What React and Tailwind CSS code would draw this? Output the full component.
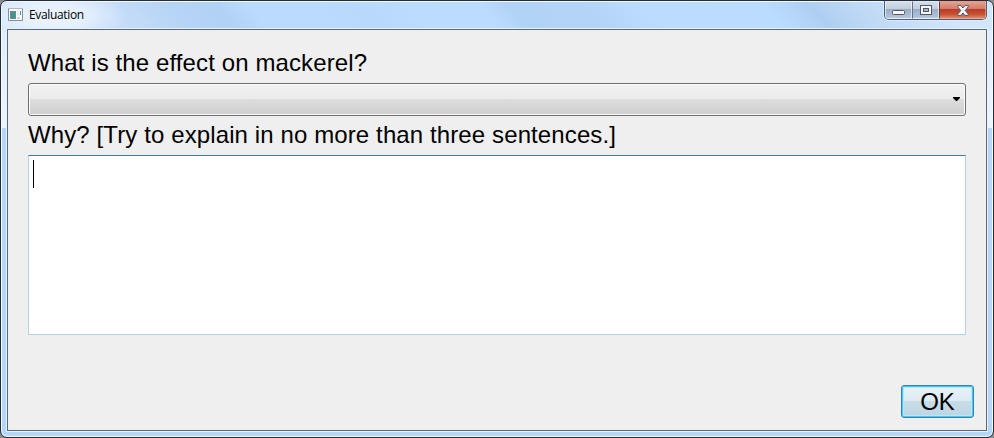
function TitleBar() {
  return (
    <header className="flex h-[27px] shrink-0 items-start justify-between pl-[1px]">
      <div className="flex h-[26px] items-center">
        <svg width="15" height="13" viewBox="0 0 15 13" className="-mt-px shrink-0" shapeRendering="crispEdges">
          <rect width="15" height="13" fill="#8a8f94" />
          <rect width="15" height="1" fill="#b4b6b8" />
          <rect x="1" y="1" width="13" height="11" fill="#fafafa" />
          <rect x="2" y="3" width="6" height="8" fill="#5a8fb0" />
          <rect x="3" y="4" width="4" height="6" fill="#459578" />
          <rect x="9" y="3" width="2" height="5" fill="#edf0f1" />
          <rect x="12" y="3" width="1" height="4" fill="#47988b" />
          <rect x="9" y="9" width="3" height="2" fill="#d2d4d5" />
        </svg>
        <span className="ml-[6px] -mt-px font-['Open_Sans','Noto_Sans',sans-serif] text-[12px] leading-none tracking-[-0.35px] text-black">
          Evaluation
        </span>
      </div>
      <div className="-mt-px flex h-[19px] overflow-hidden rounded-b-[5px] border border-t-0 border-[#525e70] shadow-[0_0_0_1px_#d9eafa]">
        <button aria-label="Minimize" className="flex w-[27px] items-center justify-center border border-[#ffffff99] bg-[linear-gradient(#d2deea_0,#c2cddb_45%,#99adc4_46%,#b2c7de_100%)]">
          <svg width="13" height="5" viewBox="0 0 13 5" className="mt-[5px]">
            <rect x=".5" y=".5" width="12" height="4" rx="1" fill="#f6f6f6" stroke="#535666" />
          </svg>
        </button>
        <button aria-label="Maximize" className="flex w-[27px] items-center justify-center border border-l-[#647489] border-y-[#ffffff99] border-r-[#ffffff99] bg-[linear-gradient(#d2deea_0,#c2cddb_45%,#99adc4_46%,#b2c7de_100%)]">
          <svg width="12" height="10" viewBox="0 0 12 10" shapeRendering="crispEdges">
            <rect x=".5" y=".5" width="11" height="9" fill="#f6f6f6" stroke="#535666" />
            <rect x="3.5" y="3.5" width="5" height="3" fill="#9fb8d2" stroke="#535666" />
          </svg>
        </button>
        <button aria-label="Close" className="flex w-[47px] items-center justify-center border border-l-[#6b3436] border-y-[#f0b3a599] border-r-[#f0b3a599] bg-[linear-gradient(#e4a090_0,#d27a68_45%,#b93c29_46%,#c64e30_75%,#dc8a68_100%)]">
          <svg width="12" height="11" viewBox="0 0 12 11">
            <path
              d="M.7.6h3.4L6 3 7.9.6h3.4v1.2L8.2 5.5l3.1 3.7v1.2H7.9L6 8l-1.9 2.4H.7V9.2l3.1-3.7L.7 1.8z"
              fill="#f7f7f7"
              stroke="#535666"
              strokeLinejoin="round"
            />
          </svg>
        </button>
      </div>
    </header>
  );
}

export default function App() {
  return (
    <div className="h-[438px] w-[994px] overflow-hidden bg-[#8b8b8d]">
      <div className="relative flex h-full w-full flex-col overflow-hidden rounded-[7px] border border-[#252c39] bg-[linear-gradient(#dcebfc_0,#edf4fd_127px,#b6d6f7_127px,#b6d6f7_100%)] px-[6px] pb-[6px] pt-px shadow-[inset_0_0_0_1px_#f2f9ff]">
        <div className="pointer-events-none absolute inset-x-px top-px h-[28px] bg-[radial-gradient(ellipse_75px_28px_at_50px_14px,#eef6fe_0%,#e8f2fedd_45%,#e2effe00_100%),linear-gradient(50deg,#d0e4fb_0,#cde2fa_50px,#c6ddf8_95px,#b6d4f5_145px,#b1d2f4_180px,#bbdbfd_205px,#bbdbfd_250px,#b8d9fb_290px,#bbdcfd_325px,#bbdcfe_383px,#b1d3f5_403px,#b3d4f6_460px,#bcdcfd_505px,#badcfe_600px,#aecff1_635px,#c0daf6_675px,#d1e5fb_735px)]" />
        <div className="relative flex flex-1 flex-col">
          <TitleBar />
          <main className="flex flex-1 flex-col border border-[#5b6877] bg-[#efefef] px-[20px] font-['Liberation_Sans',Arial,sans-serif] text-[24px] text-black shadow-[0_0_0_1px_#e5f2ff]">
            <label className="mt-[18px] h-[28px] whitespace-nowrap leading-[30px] tracking-[0.11px]">What is the effect on mackerel?</label>
            <div className="mt-[7px] flex h-[33px] items-center justify-end rounded-[3px] border border-[#707070] bg-[linear-gradient(#f2f2f2_0,#ebebeb_50%,#dddddd_50%,#cfcfcf_100%)] pr-[5px] shadow-[inset_0_0_0_1px_#fbfbfb]">
              <svg width="7" height="4" viewBox="0 0 7 4" className="-mt-px">
                <path d="M0 0h7v1L4 4H3L0 1z" fill="#000" />
              </svg>
            </div>
            <label className="mt-[4px] h-[30px] whitespace-nowrap leading-[30px] tracking-[0.11px]">Why? [Try to explain in no more than three sentences.]</label>
            <div className="mt-[5px] h-[180px] border border-[#b5cfe7] border-t-[#3d7bad] bg-white pl-[4px] pt-[4px]">
              <div className="h-[28px] w-px bg-black" />
            </div>
            <button className="-mr-[8px] mt-[50px] h-[33px] w-[73px] self-end rounded-[3px] border border-[#3c7fb1] bg-[linear-gradient(#eaf3f8_0,#dceaf2_49%,#c7dce8_50%,#bdd5e3_100%)] leading-[30px] shadow-[inset_0_0_0_1px_#3fcdf4,inset_0_0_0_2px_#aeeafa]">
              OK
            </button>
          </main>
        </div>
      </div>
    </div>
  );
}
